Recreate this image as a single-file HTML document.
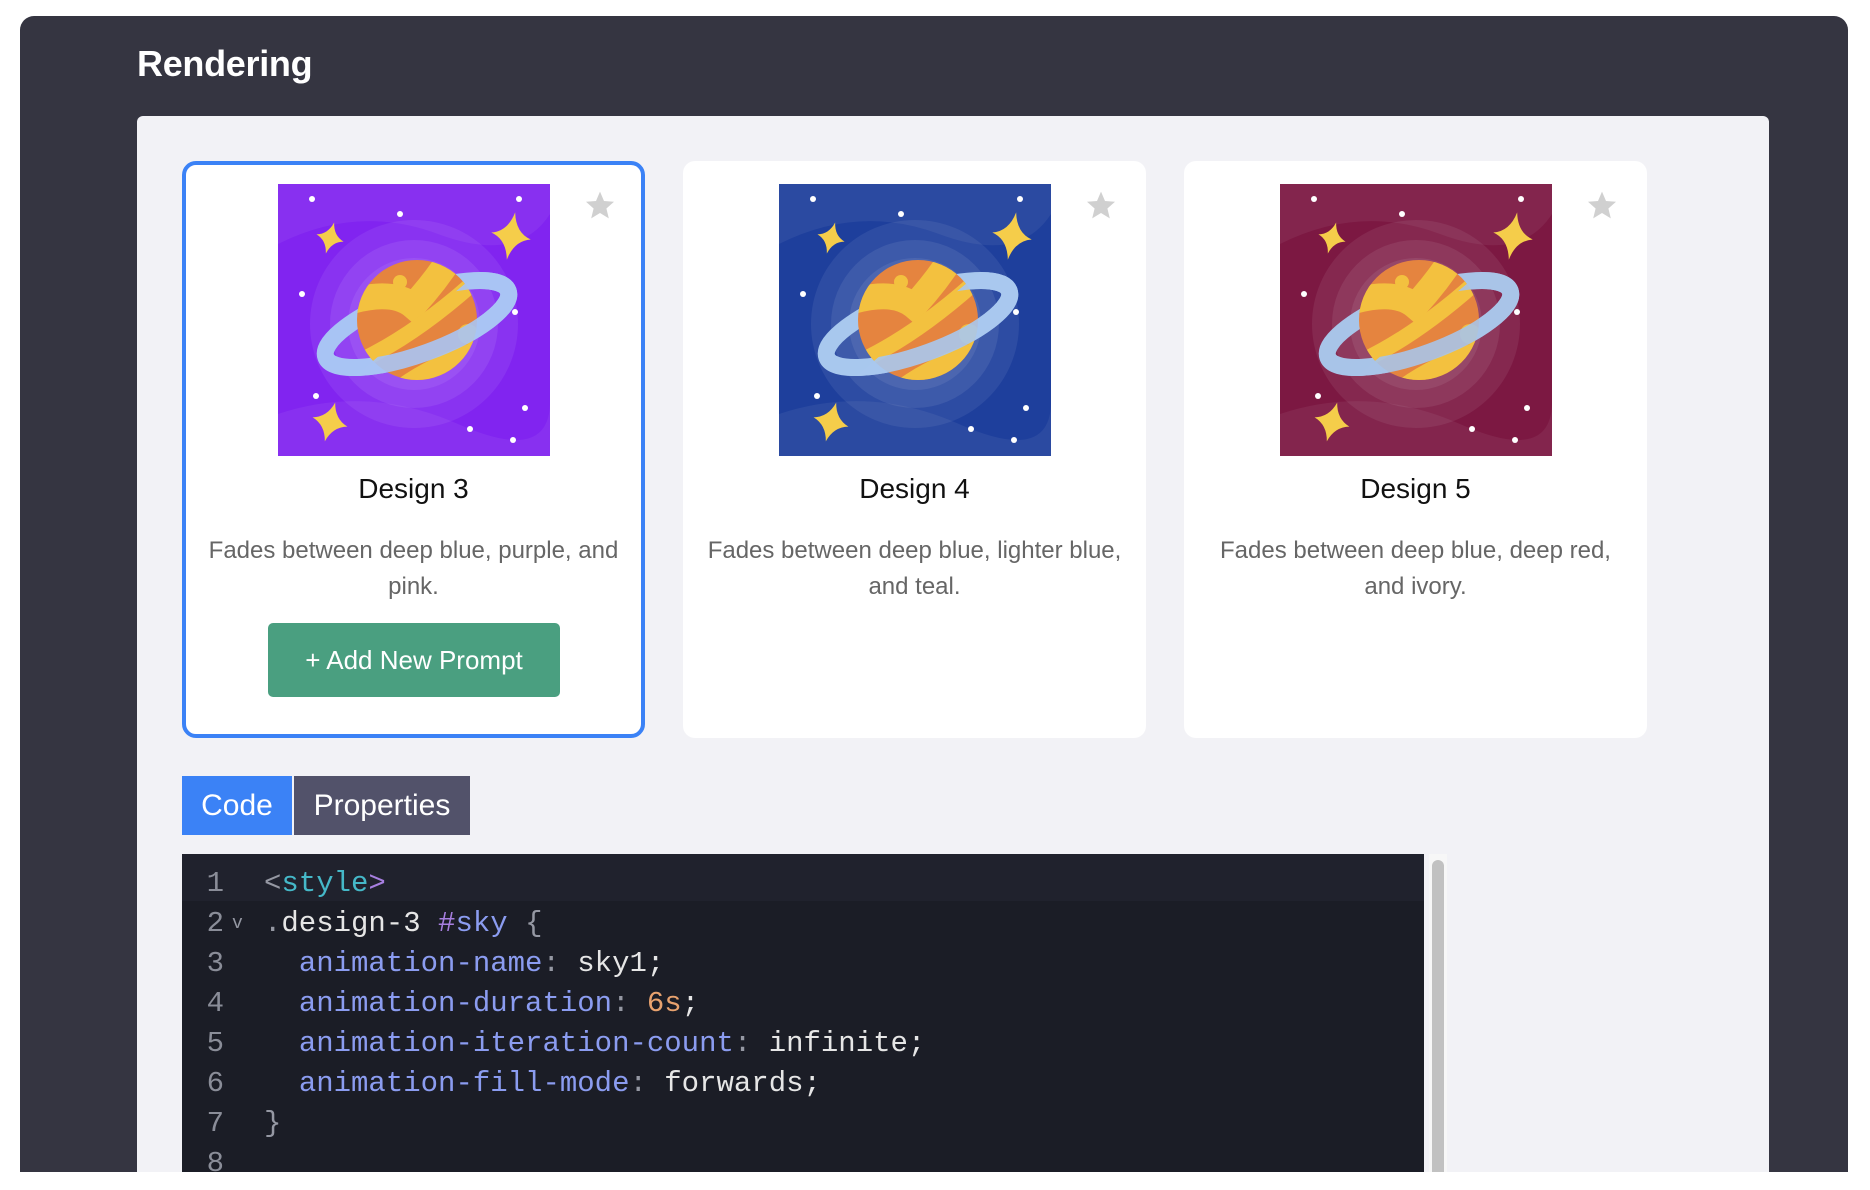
<!DOCTYPE html>
<html><head><meta charset="utf-8"><style>
*{box-sizing:border-box;margin:0;padding:0}
body{width:1870px;height:1190px;background:#fff;font-family:"Liberation Sans",sans-serif;position:relative;overflow:hidden}
.frame{position:absolute;left:20px;top:16px;width:1828px;height:1156px;background:#353541;border-radius:14px 14px 0 0;overflow:hidden}
.title{position:absolute;left:117px;top:27px;color:#fff;font-weight:bold;font-size:36px;letter-spacing:-0.3px}
.panel{position:absolute;left:117px;top:100px;width:1632px;height:1056px;background:#f2f2f6;border-radius:6px 6px 0 0}
.card{position:absolute;top:45px;width:463px;height:577px;background:#fff;border-radius:12px;text-align:center}
.card.sel{border:4px solid #3b82f6;border-radius:14px}
.img{position:absolute;left:96px;top:23px;width:272px;height:272px}
.sel .img{left:92px;top:19px}
.star{position:absolute;left:402px;top:28px;width:32px;height:32px}
.sel .star{left:398px;top:24px}
.ct{position:absolute;left:0;right:0;top:312px;font-size:28px;color:#111}
.sel .ct{top:308px}
.cd{position:absolute;left:18px;right:18px;top:372px;font-size:24px;line-height:36px;color:#666}
.sel .cd{top:368px;left:14px;right:14px}
.btn{position:absolute;left:82px;top:458px;width:292px;height:74px;background:#4a9f80;border-radius:5px;color:#fff;font-size:26px;line-height:74px}
.tabs{position:absolute;left:45px;top:660px;height:59px}
.tab{position:absolute;top:0;height:59px;line-height:59px;color:#fff;font-size:30px;text-align:center}
.code{position:absolute;left:45px;top:738px;width:1242px;height:320px;background:#1b1d26;font-family:"Liberation Mono",monospace;font-size:29px;color:#e6e6e6;overflow:hidden}
.hl{position:absolute;left:0;top:0;width:100%;height:47px;background:#20222d}
.ln{position:absolute;left:22px;color:#8a8d98;width:20px;text-align:right}
.tx{position:absolute;left:82px;white-space:pre}
.k{color:#8b9cf0}.p{color:#a77fe0}.o{color:#e8a26e}.g{color:#9598a3}.t{color:#45b8c8}
.sb{position:absolute;left:1292px;top:738px;width:18px;height:320px;background:#f7f7f7}
.sb div{position:absolute;left:3px;top:6px;width:12px;height:320px;background:#c1c1c1;border-radius:6px}
</style></head><body>
<svg width="0" height="0" style="position:absolute"><defs>
<clipPath id="pc"><circle cx="139" cy="136" r="60"/></clipPath>
<clipPath id="front"><rect x="-40" y="140" width="360" height="200" transform="rotate(-20 139 140)"/></clipPath>
</defs></svg>

<div class="frame">
<div class="title">Rendering</div>
<div class="panel">

<div class="card sel" style="left:45px">
<svg class="img" viewBox="0 0 272 272"><rect width="272" height="272" fill="#8124f0"/><path d="M0 60 Q80 20 160 50 T272 30 V0 H0Z" fill="#fff" opacity=".06"/><path d="M0 230 Q90 200 180 240 T272 220 V272 H0Z" fill="#fff" opacity=".06"/><circle cx="136" cy="140" r="104" fill="#fff" opacity=".07"/><circle cx="136" cy="140" r="84" fill="#fff" opacity=".08"/><circle cx="136" cy="140" r="66" fill="#fff" opacity=".08"/>
<ellipse cx="139" cy="140" rx="97" ry="30" transform="rotate(-20 139 140)" fill="none" stroke="#a8c4f4" stroke-width="17"/>
<g clip-path="url(#pc)"><rect x="70" y="70" width="140" height="140" fill="#e5843f"/><path d="M70 118 Q115 105 135 122 Q160 95 180 62" stroke="#f3c13f" stroke-width="26" fill="none"/><path d="M80 178 Q140 150 205 90" stroke="#f3c13f" stroke-width="16" fill="none"/><path d="M125 205 Q160 180 210 165" stroke="#f3c13f" stroke-width="22" fill="none"/><circle cx="190" cy="150" r="10" fill="#f3c13f"/></g><circle cx="122" cy="98" r="7" fill="#f3c13f"/>
<ellipse clip-path="url(#front)" cx="139" cy="140" rx="97" ry="30" transform="rotate(-20 139 140)" fill="none" stroke="#a8c4f4" stroke-width="17" opacity=".9"/>
<g fill="#f5cd4a"><path transform="translate(52,54) rotate(15)" d="M0-16Q3-3 14 0Q3 3 0 16Q-3 3-14 0Q-3-3 0-16Z"/><path transform="translate(233,52) rotate(10)" d="M0-24Q4-4 20 0Q4 4 0 24Q-4 4-20 0Q-4-4 0-24Z"/><path transform="translate(52,238) rotate(15)" d="M0-20Q4-4 18 0Q4 4 0 20Q-4 4-18 0Q-4-4 0-20Z"/></g><g fill="#fff"><circle cx="34" cy="15" r="3"/><circle cx="241" cy="15" r="3"/><circle cx="122" cy="30" r="3"/><circle cx="24" cy="110" r="3"/><circle cx="237" cy="128" r="3"/><circle cx="38" cy="212" r="3"/><circle cx="247" cy="224" r="3"/><circle cx="192" cy="245" r="3"/><circle cx="235" cy="256" r="3"/></g></svg>
<svg class="star" viewBox="0 0 24 24"><path d="M12 2l3 7 7.5.6-5.7 5 1.8 7.4L12 18l-6.6 4 1.8-7.4-5.7-5L9 9z" fill="#d0d0d0"/></svg>
<div class="ct">Design 3</div>
<div class="cd">Fades between deep blue, purple, and pink.</div>
<div class="btn">+ Add New Prompt</div>
</div>

<div class="card" style="left:546px">
<svg class="img" viewBox="0 0 272 272"><rect width="272" height="272" fill="#1e3f9c"/><path d="M0 60 Q80 20 160 50 T272 30 V0 H0Z" fill="#fff" opacity=".06"/><path d="M0 230 Q90 200 180 240 T272 220 V272 H0Z" fill="#fff" opacity=".06"/><circle cx="136" cy="140" r="104" fill="#fff" opacity=".07"/><circle cx="136" cy="140" r="84" fill="#fff" opacity=".08"/><circle cx="136" cy="140" r="66" fill="#fff" opacity=".08"/>
<ellipse cx="139" cy="140" rx="97" ry="30" transform="rotate(-20 139 140)" fill="none" stroke="#a8c8ee" stroke-width="17"/>
<g clip-path="url(#pc)"><rect x="70" y="70" width="140" height="140" fill="#e5843f"/><path d="M70 118 Q115 105 135 122 Q160 95 180 62" stroke="#f3c13f" stroke-width="26" fill="none"/><path d="M80 178 Q140 150 205 90" stroke="#f3c13f" stroke-width="16" fill="none"/><path d="M125 205 Q160 180 210 165" stroke="#f3c13f" stroke-width="22" fill="none"/><circle cx="190" cy="150" r="10" fill="#f3c13f"/></g><circle cx="122" cy="98" r="7" fill="#f3c13f"/>
<ellipse clip-path="url(#front)" cx="139" cy="140" rx="97" ry="30" transform="rotate(-20 139 140)" fill="none" stroke="#a8c8ee" stroke-width="17" opacity=".9"/>
<g fill="#f5cd4a"><path transform="translate(52,54) rotate(15)" d="M0-16Q3-3 14 0Q3 3 0 16Q-3 3-14 0Q-3-3 0-16Z"/><path transform="translate(233,52) rotate(10)" d="M0-24Q4-4 20 0Q4 4 0 24Q-4 4-20 0Q-4-4 0-24Z"/><path transform="translate(52,238) rotate(15)" d="M0-20Q4-4 18 0Q4 4 0 20Q-4 4-18 0Q-4-4 0-20Z"/></g><g fill="#fff"><circle cx="34" cy="15" r="3"/><circle cx="241" cy="15" r="3"/><circle cx="122" cy="30" r="3"/><circle cx="24" cy="110" r="3"/><circle cx="237" cy="128" r="3"/><circle cx="38" cy="212" r="3"/><circle cx="247" cy="224" r="3"/><circle cx="192" cy="245" r="3"/><circle cx="235" cy="256" r="3"/></g></svg>
<svg class="star" viewBox="0 0 24 24"><path d="M12 2l3 7 7.5.6-5.7 5 1.8 7.4L12 18l-6.6 4 1.8-7.4-5.7-5L9 9z" fill="#d0d0d0"/></svg>
<div class="ct">Design 4</div>
<div class="cd">Fades between deep blue, lighter blue, and teal.</div>
</div>

<div class="card" style="left:1047px">
<svg class="img" viewBox="0 0 272 272"><rect width="272" height="272" fill="#7c1842"/><path d="M0 60 Q80 20 160 50 T272 30 V0 H0Z" fill="#fff" opacity=".06"/><path d="M0 230 Q90 200 180 240 T272 220 V272 H0Z" fill="#fff" opacity=".06"/><circle cx="136" cy="140" r="104" fill="#fff" opacity=".07"/><circle cx="136" cy="140" r="84" fill="#fff" opacity=".08"/><circle cx="136" cy="140" r="66" fill="#fff" opacity=".08"/>
<ellipse cx="139" cy="140" rx="97" ry="30" transform="rotate(-20 139 140)" fill="none" stroke="#a8c4e8" stroke-width="17"/>
<g clip-path="url(#pc)"><rect x="70" y="70" width="140" height="140" fill="#e5843f"/><path d="M70 118 Q115 105 135 122 Q160 95 180 62" stroke="#f3c13f" stroke-width="26" fill="none"/><path d="M80 178 Q140 150 205 90" stroke="#f3c13f" stroke-width="16" fill="none"/><path d="M125 205 Q160 180 210 165" stroke="#f3c13f" stroke-width="22" fill="none"/><circle cx="190" cy="150" r="10" fill="#f3c13f"/></g><circle cx="122" cy="98" r="7" fill="#f3c13f"/>
<ellipse clip-path="url(#front)" cx="139" cy="140" rx="97" ry="30" transform="rotate(-20 139 140)" fill="none" stroke="#a8c4e8" stroke-width="17" opacity=".9"/>
<g fill="#f5cd4a"><path transform="translate(52,54) rotate(15)" d="M0-16Q3-3 14 0Q3 3 0 16Q-3 3-14 0Q-3-3 0-16Z"/><path transform="translate(233,52) rotate(10)" d="M0-24Q4-4 20 0Q4 4 0 24Q-4 4-20 0Q-4-4 0-24Z"/><path transform="translate(52,238) rotate(15)" d="M0-20Q4-4 18 0Q4 4 0 20Q-4 4-18 0Q-4-4 0-20Z"/></g><g fill="#fff"><circle cx="34" cy="15" r="3"/><circle cx="241" cy="15" r="3"/><circle cx="122" cy="30" r="3"/><circle cx="24" cy="110" r="3"/><circle cx="237" cy="128" r="3"/><circle cx="38" cy="212" r="3"/><circle cx="247" cy="224" r="3"/><circle cx="192" cy="245" r="3"/><circle cx="235" cy="256" r="3"/></g></svg>
<svg class="star" viewBox="0 0 24 24"><path d="M12 2l3 7 7.5.6-5.7 5 1.8 7.4L12 18l-6.6 4 1.8-7.4-5.7-5L9 9z" fill="#d0d0d0"/></svg>
<div class="ct">Design 5</div>
<div class="cd">Fades between deep blue, deep red, and ivory.</div>
</div>

<div class="tabs">
<div class="tab" style="left:0;width:110px;background:#3b82f6">Code</div>
<div class="tab" style="left:112px;width:176px;background:#52526a">Properties</div>
</div>

<div class="code">
<div class="hl"></div>
<div class="ln" style="top:13px">1</div><div class="tx" style="top:13px"><span class="g">&lt;</span><span class="t">style</span><span class="p">&gt;</span></div>
<div class="ln" style="top:53px">2</div><div class="g" style="position:absolute;left:50px;top:60px;font-size:18px">v</div><div class="tx" style="top:53px"><span class="g">.</span>design-3 <span class="p">#</span><span class="k">sky</span> <span class="g">{</span></div>
<div class="ln" style="top:93px">3</div><div class="tx" style="top:93px">  <span class="k">animation-name</span><span class="g">:</span> sky1;</div>
<div class="ln" style="top:133px">4</div><div class="tx" style="top:133px">  <span class="k">animation-duration</span><span class="g">:</span> <span class="o">6s</span>;</div>
<div class="ln" style="top:173px">5</div><div class="tx" style="top:173px">  <span class="k">animation-iteration-count</span><span class="g">:</span> infinite;</div>
<div class="ln" style="top:213px">6</div><div class="tx" style="top:213px">  <span class="k">animation-fill-mode</span><span class="g">:</span> forwards;</div>
<div class="ln" style="top:253px">7</div><div class="tx" style="top:253px"><span class="g">}</span></div>
<div class="ln" style="top:293px">8</div>
</div>
<div class="sb"><div></div></div>

</div>
</div>
</body></html>
